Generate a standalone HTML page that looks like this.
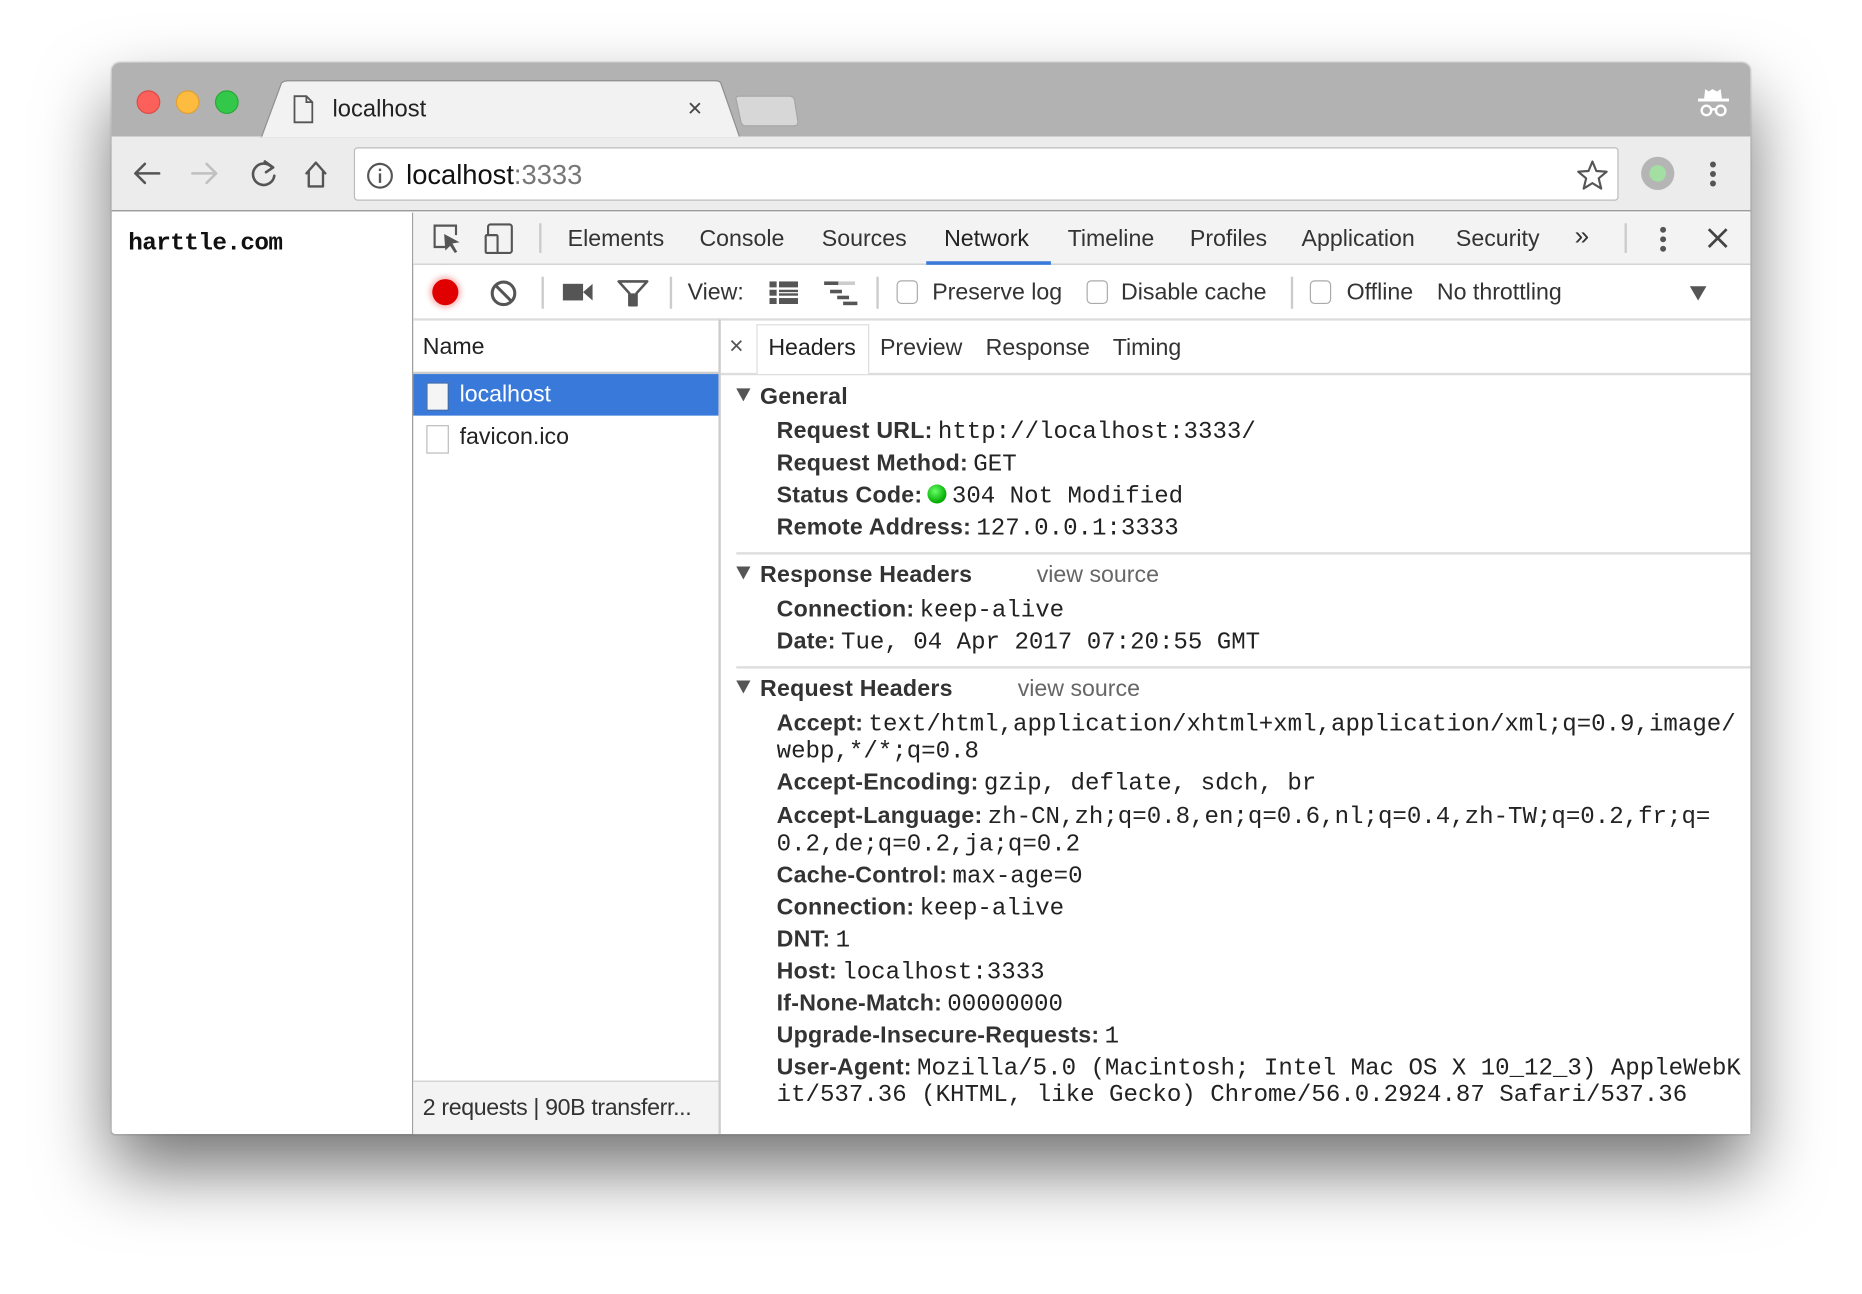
<!DOCTYPE html>
<html><head><meta charset="utf-8"><style>
*{margin:0;padding:0;box-sizing:border-box}
html,body{width:1862px;height:1294px;overflow:hidden;background:#fff}
#s{position:absolute;left:0;top:0;width:1568px;height:1090px;transform:scale(1.1875);transform-origin:0 0;font-family:"Liberation Sans",Arial,sans-serif}
.a{position:absolute}
.t{position:absolute;white-space:nowrap;line-height:24px}
.m{font-family:"Liberation Mono",monospace;font-size:20.3px;color:#222}
.b{font-weight:bold;font-size:19.5px;color:#333;letter-spacing:0.2px}
.tr{display:inline-block;width:0;height:0;border-left:6px solid transparent;border-right:6px solid transparent;border-top:11px solid #555;margin-right:8px;vertical-align:2px}
.dt{font-size:19.5px;color:#333;top:189px}
.cb{position:absolute;width:18px;height:20px;border:1.5px solid #aaa;border-radius:4px;background:#fff;top:236px}
</style></head><body><div id="s">
<div class="a" style="left:94px;top:53px;width:1380px;height:902px;border-radius:7px 7px 3px 3px;box-shadow:0 30px 60px rgba(0,0,0,.55),0 0 2px rgba(0,0,0,.35);background:#fff;overflow:hidden">
 <div class="a" style="left:0;top:0;width:1380px;height:62px;background:#b2b2b2"></div>
 <div class="a" style="left:0;top:62px;width:1380px;height:63px;background:#ececec;border-bottom:1.5px solid #8a8a8a"></div>
</div>
<div class="a" style="left:115px;top:76px;width:20px;height:20px;border-radius:50%;background:#fc605b;border:1px solid #de4a44"></div>
<div class="a" style="left:148px;top:76px;width:20px;height:20px;border-radius:50%;background:#fdbc40;border:1px solid #dea032"></div>
<div class="a" style="left:181px;top:76px;width:20px;height:20px;border-radius:50%;background:#34c84a;border:1px solid #27aa35"></div>
<svg class="a" style="left:210px;top:66px" width="480" height="50"><path d="M10 50 L27 4 Q29 2 33 2 L392 2 Q396 2 397 4 L413 50 Z" fill="#f2f2f2" stroke="#8f8f8f" stroke-width="1"/><path d="M410 18 Q409 15 413 15 L455 15 Q458 15 459 18 L462 37 Q462 40 458 40 L418 40 Q415 40 414 37 Z" fill="#d7d7d7" stroke="#a5a5a5"/><rect x="10" y="49" width="404" height="2" fill="#f2f2f2"/></svg>
<svg class="a" style="left:246px;top:80px" width="20" height="24"><path d="M2 1 H12 L17 6 V23 H2 Z M12 1 V6 H17" fill="none" stroke="#555" stroke-width="1.5"/></svg>
<div class="t" style="left:280px;top:80px;font-size:20px;color:#222">localhost</div>
<div class="t" style="left:579px;top:80px;font-size:21px;color:#444">×</div>
<svg class="a" style="left:1428px;top:73px" width="30" height="28"><path d="M8 2 L11 4 L14 2 L18 4 L21 2 L22 10 H7 Z" fill="#fff"/><rect x="2" y="10" width="26" height="2.5" fill="#fff"/><circle cx="9" cy="20" r="4" fill="none" stroke="#fff" stroke-width="2"/><circle cx="21" cy="20" r="4" fill="none" stroke="#fff" stroke-width="2"/><path d="M13 19 H17" stroke="#fff" stroke-width="2"/></svg>
<svg class="a" style="left:108px;top:132px" width="180" height="30"><g fill="none" stroke-width="2.2" stroke-linecap="round" stroke-linejoin="round"><path d="M26 14 H6 M14 6 L6 14 L14 22" stroke="#555"/><path d="M54 14 H74 M66 6 L74 14 L66 22" stroke="#c0c0c0"/><path d="M121 9 A9 9 0 1 0 123 16" stroke="#555"/><path d="M115 4 L122 9 L116 13" stroke="#555"/><path d="M150 14 L158 5 L166 14 M152 12 V25 H164 V12" stroke="#555" stroke-width="2"/></g></svg>
<div class="a" style="left:298px;top:124px;width:1065px;height:45px;background:#fff;border:1px solid #bcbcbc;border-radius:3px"></div>
<svg class="a" style="left:308px;top:136px" width="24" height="24"><circle cx="12" cy="12" r="10" fill="none" stroke="#555" stroke-width="1.8"/><rect x="11" y="10" width="2" height="8" fill="#555"/><rect x="11" y="6" width="2" height="2" fill="#555"/></svg>
<div class="t" style="left:342px;top:135px;font-size:23px;color:#111">localhost<span style="color:#777">:3333</span></div>
<svg class="a" style="left:1327px;top:134px" width="28" height="28"><path d="M14 2 L17.3 10 L26 10.6 L19.3 16.2 L21.4 24.8 L14 20.2 L6.6 24.8 L8.7 16.2 L2 10.6 L10.7 10 Z" fill="none" stroke="#555" stroke-width="1.8" stroke-linejoin="round"/></svg>
<div class="a" style="left:1382px;top:132px;width:28px;height:28px;border-radius:50%;background:#b5b5b5"></div>
<div class="a" style="left:1389px;top:139px;width:14px;height:14px;border-radius:50%;background:#a3dfa3"></div>
<div class="a" style="left:1440px;top:136px;width:5px;height:5px;border-radius:50%;background:#555;box-shadow:0 8px 0 #555,0 16px 0 #555"></div>
<div class="t" style="left:108px;top:194px;font-family:'Liberation Mono',monospace;font-size:20.5px;font-weight:bold;color:#111;letter-spacing:-0.5px">harttle.com</div>
<div class="a" style="left:347px;top:179px;width:1127px;height:776px;border-left:1.5px solid #999;background:#fff"></div>
<div class="a" style="left:348px;top:179px;width:1126px;height:44px;background:#f3f3f3;border-bottom:1.5px solid #ccc"></div>
<div class="a" style="left:780px;top:220px;width:105px;height:2.5px;background:#3879d9"></div>
<svg class="a" style="left:362px;top:186px" width="80" height="30"><path d="M13 22 H4 V4 H22 V12" fill="none" stroke="#555" stroke-width="1.8"/><path d="M12 11 L25 18 L19 19 L23 26 L21 27 L17 21 L13 25 Z" fill="#555"/><rect x="49" y="3" width="20" height="24" rx="2" fill="none" stroke="#555" stroke-width="1.8"/><rect x="47" y="12" width="10" height="15" rx="1" fill="#f3f3f3" stroke="#555" stroke-width="1.8"/></svg>
<div class="a" style="left:454px;top:188px;width:1.5px;height:25px;background:#ccc"></div>
<div class="t dt" style="left:478px">Elements</div>
<div class="t dt" style="left:589px">Console</div>
<div class="t dt" style="left:692px">Sources</div>
<div class="t dt" style="left:795px;color:#222">Network</div>
<div class="t dt" style="left:899px">Timeline</div>
<div class="t dt" style="left:1002px">Profiles</div>
<div class="t dt" style="left:1096px">Application</div>
<div class="t dt" style="left:1226px">Security</div>
<div class="t dt" style="left:1326px;font-size:22px;top:187px">»</div>
<div class="a" style="left:1368px;top:188px;width:1.5px;height:25px;background:#ccc"></div>
<div class="a" style="left:1398px;top:191px;width:5px;height:5px;border-radius:50%;background:#555;box-shadow:0 8px 0 #555,0 16px 0 #555"></div>
<svg class="a" style="left:1437px;top:191px" width="20" height="20"><path d="M2 2 L17 17 M17 2 L2 17" stroke="#444" stroke-width="2.3"/></svg>
<div class="a" style="left:348px;top:268px;width:1126px;height:1.5px;background:#ddd"></div>
<div class="a" style="left:364px;top:235px;width:22px;height:22px;border-radius:50%;background:#e00000;box-shadow:0 0 5px 2px rgba(230,0,0,.3)"></div>
<svg class="a" style="left:411px;top:234px" width="26" height="26"><circle cx="13" cy="13" r="9.5" fill="none" stroke="#555" stroke-width="2.6"/><path d="M6.5 6.5 L19.5 19.5" stroke="#555" stroke-width="2.6"/></svg>
<div class="a" style="left:456px;top:233px;width:1.5px;height:27px;background:#ccc"></div>
<svg class="a" style="left:473px;top:236px" width="28" height="20"><rect x="1" y="3" width="17" height="14" fill="#555"/><path d="M18 10 L26 3 V17 Z" fill="#555"/></svg>
<svg class="a" style="left:519px;top:235px" width="28" height="24"><path d="M2 2 H26 L17 12 V22 H11 V12 Z" fill="none" stroke="#555" stroke-width="2.2" stroke-linejoin="round"/><path d="M11 12 H17 V22 H11 Z" fill="#555"/></svg>
<div class="a" style="left:564px;top:233px;width:1.5px;height:27px;background:#ccc"></div>
<div class="t" style="left:579px;top:234px;font-size:19.5px;color:#333">View:</div>
<svg class="a" style="left:647px;top:236px" width="80" height="22"><g fill="#555"><rect x="1" y="1" width="6" height="5"/><rect x="9" y="1" width="16" height="5"/><rect x="1" y="8" width="6" height="5"/><rect x="9" y="8" width="16" height="2"/><rect x="9" y="11" width="16" height="2"/><rect x="1" y="15" width="6" height="5"/><rect x="9" y="15" width="16" height="5"/><rect x="47" y="1" width="12" height="3"/><rect x="59" y="1" width="14" height="3" fill="#ccc"/><rect x="52" y="8" width="10" height="3"/><rect x="58" y="13" width="10" height="3"/><rect x="63" y="18" width="12" height="3"/></g></svg>
<div class="a" style="left:738px;top:233px;width:1.5px;height:27px;background:#ccc"></div>
<div class="cb" style="left:755px"></div>
<div class="t" style="left:785px;top:234px;font-size:19.5px;color:#333">Preserve log</div>
<div class="cb" style="left:915px"></div>
<div class="t" style="left:944px;top:234px;font-size:19.5px;color:#333">Disable cache</div>
<div class="a" style="left:1087px;top:233px;width:1.5px;height:27px;background:#ccc"></div>
<div class="cb" style="left:1103px"></div>
<div class="t" style="left:1134px;top:234px;font-size:19.5px;color:#333">Offline</div>
<div class="t" style="left:1210px;top:234px;font-size:19.5px;color:#333">No throttling</div>
<svg class="a" style="left:1422px;top:240px" width="16" height="14"><path d="M1 1 H15 L8 13 Z" fill="#555"/></svg>
<div class="a" style="left:605px;top:269px;width:1.5px;height:686px;background:#ccc"></div>
<div class="a" style="left:348px;top:313px;width:257px;height:2px;background:#ccc"></div>
<div class="t" style="left:356px;top:280px;font-size:19.5px;color:#222">Name</div>
<div class="a" style="left:348px;top:315px;width:257px;height:35px;background:#3879d9"></div>
<div class="a" style="left:359px;top:322px;width:19px;height:24px;background:#f5f5f5;border:1px solid #2b5fa8"></div>
<div class="t" style="left:387px;top:320px;font-size:19.5px;color:#fff">localhost</div>
<div class="a" style="left:359px;top:358px;width:19px;height:24px;background:#fff;border:1.5px solid #bbb"></div>
<div class="t" style="left:387px;top:356px;font-size:19.5px;color:#222">favicon.ico</div>
<div class="a" style="left:348px;top:910px;width:257px;height:45px;background:#f3f3f3;border-top:1.5px solid #ccc"></div>
<div class="t" style="left:356px;top:921px;font-size:19.5px;color:#333;letter-spacing:-0.3px">2 requests | 90B transferr...</div>
<div class="a" style="left:607px;top:314px;width:867px;height:2px;background:#ddd"></div>
<div class="t" style="left:614px;top:280px;font-size:21px;color:#555">×</div>
<div class="a" style="left:637px;top:273px;width:95px;height:42px;border:1.5px solid #ddd;border-bottom:none;background:#fff"></div>
<div class="t" style="left:647px;top:281px;font-size:19.5px;color:#222">Headers</div>
<div class="t" style="left:741px;top:281px;font-size:19.5px;color:#333">Preview</div>
<div class="t" style="left:830px;top:281px;font-size:19.5px;color:#333">Response</div>
<div class="t" style="left:937px;top:281px;font-size:19.5px;color:#333">Timing</div>
<div class="t b" style="left:620px;top:322px"><span class="tr"></span>General</div>
<div class="t" style="left:654px;top:351px"><span class="b">Request URL:</span> <span class="m">http://localhost:3333/</span></div>
<div class="t" style="left:654px;top:378px"><span class="b">Request Method:</span> <span class="m">GET</span></div>
<div class="t" style="left:654px;top:405px"><span class="b">Status Code:</span> <span style="display:inline-block;width:16px;height:16px;border-radius:50%;background:radial-gradient(circle at 40% 35%,#6f6,#0a0 70%);vertical-align:-1px"></span> <span class="m">304 Not Modified</span></div>
<div class="t" style="left:654px;top:432px"><span class="b">Remote Address:</span> <span class="m">127.0.0.1:3333</span></div>
<div class="a" style="left:620px;top:465px;width:854px;height:1.5px;background:#ddd"></div>
<div class="t b" style="left:620px;top:472px"><span class="tr"></span>Response Headers</div>
<div class="t" style="left:873px;top:472px;font-size:19.5px;color:#666">view source</div>
<div class="t" style="left:654px;top:501px"><span class="b">Connection:</span> <span class="m">keep-alive</span></div>
<div class="t" style="left:654px;top:528px"><span class="b">Date:</span> <span class="m">Tue, 04 Apr 2017 07:20:55 GMT</span></div>
<div class="a" style="left:620px;top:561px;width:854px;height:1.5px;background:#ddd"></div>
<div class="t b" style="left:620px;top:568px"><span class="tr"></span>Request Headers</div>
<div class="t" style="left:857px;top:568px;font-size:19.5px;color:#666">view source</div>
<div class="t" style="left:654px;top:597px"><span class="b">Accept:</span> <span class="m">text/html,application/xhtml+xml,application/xml;q=0.9,image/</span></div>
<div class="t m" style="left:654px;top:622px">webp,*/*;q=0.8</div>
<div class="t" style="left:654px;top:647px"><span class="b">Accept-Encoding:</span> <span class="m">gzip, deflate, sdch, br</span></div>
<div class="t" style="left:654px;top:675px"><span class="b">Accept-Language:</span> <span class="m">zh-CN,zh;q=0.8,en;q=0.6,nl;q=0.4,zh-TW;q=0.2,fr;q=</span></div>
<div class="t m" style="left:654px;top:700px">0.2,de;q=0.2,ja;q=0.2</div>
<div class="t" style="left:654px;top:725px"><span class="b">Cache-Control:</span> <span class="m">max-age=0</span></div>
<div class="t" style="left:654px;top:752px"><span class="b">Connection:</span> <span class="m">keep-alive</span></div>
<div class="t" style="left:654px;top:779px"><span class="b">DNT:</span> <span class="m">1</span></div>
<div class="t" style="left:654px;top:806px"><span class="b">Host:</span> <span class="m">localhost:3333</span></div>
<div class="t" style="left:654px;top:833px"><span class="b">If-None-Match:</span> <span class="m">00000000</span></div>
<div class="t" style="left:654px;top:860px"><span class="b">Upgrade-Insecure-Requests:</span> <span class="m">1</span></div>
<div class="t" style="left:654px;top:887px"><span class="b">User-Agent:</span> <span class="m">Mozilla/5.0 (Macintosh; Intel Mac OS X 10_12_3) AppleWebK</span></div>
<div class="t m" style="left:654px;top:911px">it/537.36 (KHTML, like Gecko) Chrome/56.0.2924.87 Safari/537.36</div>
</div></body></html>
